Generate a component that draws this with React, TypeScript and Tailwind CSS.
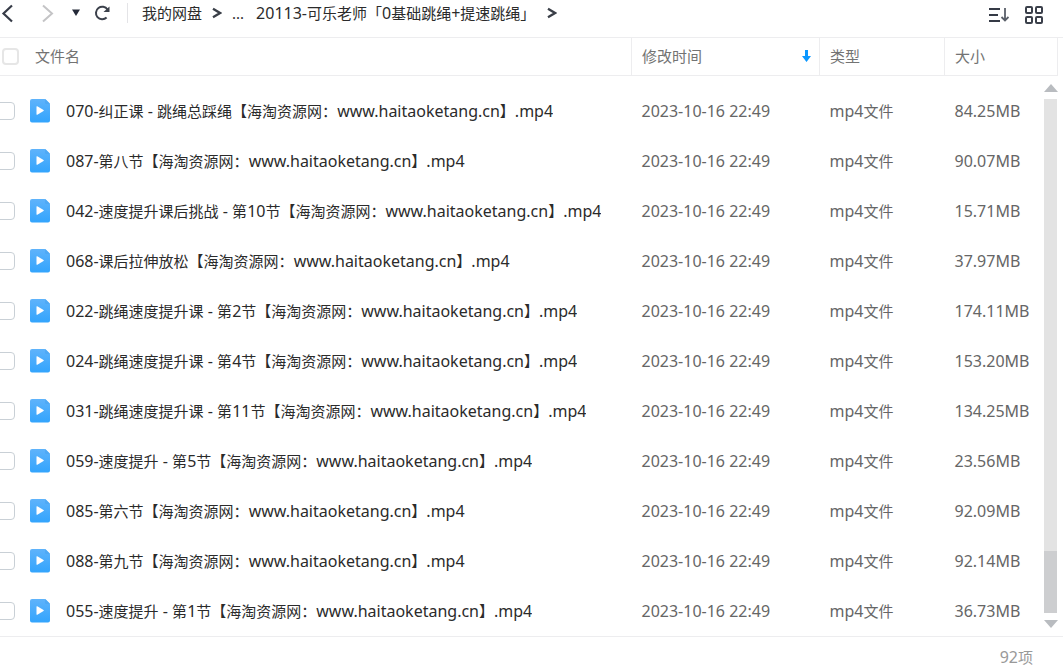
import type { ReactNode } from "react";

const SITE = "【海淘资源网：www.haitaoketang.cn】.mp4";

const files = [
  { name: "070-纠正课 - 跳绳总踩绳", size: "84.25MB" },
  { name: "087-第八节", size: "90.07MB" },
  { name: "042-速度提升课后挑战 - 第10节", size: "15.71MB" },
  { name: "068-课后拉伸放松", size: "37.97MB" },
  { name: "022-跳绳速度提升课 - 第2节", size: "174.11MB" },
  { name: "024-跳绳速度提升课 - 第4节", size: "153.20MB" },
  { name: "031-跳绳速度提升课 - 第11节", size: "134.25MB" },
  { name: "059-速度提升 - 第5节", size: "23.56MB" },
  { name: "085-第六节", size: "92.09MB" },
  { name: "088-第九节", size: "92.14MB" },
  { name: "055-速度提升 - 第1节", size: "36.73MB" },
];

// Latin letters and digits are set one size up from the Chinese text around them
function Mixed({ text }: { text: string }) {
  return text.split(/([\x20-\x7e]+)/).map((part, i) =>
    i % 2 ? <span key={i} className="text-base leading-5">{part}</span> : part
  );
}

function IconButton({ label, className = "", children }: { label: string; className?: string; children: ReactNode }) {
  return (
    <button type="button" aria-label={label} className={`flex shrink-0 items-center justify-center ${className}`}>
      {children}
    </button>
  );
}

function Separator() {
  return (
    <svg width="10" height="12" viewBox="0 0 10 12" fill="none" stroke="#3a3f48" strokeWidth="2.300" aria-hidden="true">
      <path d="M1 1.800l7 4.200-7 4.200" />
    </svg>
  );
}

function VideoIcon() {
  return (
    <svg width="22" height="26" viewBox="0 0 22 26" className="shrink-0" aria-hidden="true">
      <defs>
        <linearGradient id="video" x1="0" y1="0" x2="0" y2="1">
          <stop offset="0" stopColor="#5fb3fb" />
          <stop offset="1" stopColor="#32a4fd" />
        </linearGradient>
      </defs>
      <path d="M3 1h12.500q.8 0 1.400.6l3.500 3.500q.6.600.6 1.400v16a2 2 0 0 1-2 2H3a2 2 0 0 1-2-2V3a2 2 0 0 1 2-2z" fill="url(#video)" />
      <path d="M16 1.100l5 5h-3.500a1.500 1.500 0 0 1-1.500-1.500z" fill="#4fa9f5" />
      <path d="M7.500 8.800v7.400q0 .9.800.5l6.200-3.700q.8-.5 0-1L8.300 8.300q-.8-.4-.8.5z" fill="#fff" />
    </svg>
  );
}

function Toolbar() {
  return (
    <header className="flex h-[38px] items-start justify-between border-b border-[#ededef] pr-5">
      <div className="flex h-[25px] items-center">
        <IconButton label="后退" className="w-4">
          <svg width="16" height="20" viewBox="0 0 16 20" fill="none" stroke="#363b47" strokeWidth="2.200">
            <path d="M12 2.500L3.500 10.500l8.500 8" />
          </svg>
        </IconButton>
        <IconButton label="前进" className="ml-6 w-4">
          <svg width="16" height="20" viewBox="0 0 16 20" fill="none" stroke="#c4c4c6" strokeWidth="2">
            <path d="M3 2.500l9 8-9 8" />
          </svg>
        </IconButton>
        <IconButton label="历史记录" className="ml-3 w-4">
          <svg width="8" height="7" viewBox="0 0 8 7">
            <path d="M0 0.500h8L4 7z" fill="#242a38" />
          </svg>
        </IconButton>
        <IconButton label="刷新" className="ml-2 w-5">
          <svg width="18" height="18" viewBox="0 0 18 18" fill="none">
            <path d="M14.500 5.500A6.300 6.300 0 1 0 13.600 13.600" stroke="#3b404b" strokeWidth="2" />
            <path d="M16.500 2.500v5.500h-6z" fill="#3b404b" />
          </svg>
        </IconButton>
        <span className="ml-[15px] h-5 w-px bg-[#e4e4e7]" />
        <nav aria-label="路径" className="ml-[14px] flex items-center text-[#2b2b2b]">
          <a href="#root">我的网盘</a>
          <span className="mx-2.5"><Separator /></span>
          <a href="#parents">...</a>
          <a href="#folder" className="ml-3"><Mixed text="20113-可乐老师「0基础跳绳+提速跳绳」" /></a>
          <span className="ml-3"><Separator /></span>
        </nav>
      </div>
      <div className="flex h-[30px] items-center gap-4">
        <IconButton label="排序">
          <svg width="21" height="16" viewBox="0 0 21 16" fill="none" stroke="#353a46">
            <path d="M1 2h11M1 8h9M1 14h11" strokeWidth="2" />
            <path d="M17 1v12M13.500 10l3.500 3.500 3.500-3.500" stroke="#5a5f69" strokeWidth="1.800" />
          </svg>
        </IconButton>
        <IconButton label="网格视图">
          <svg width="18" height="18" viewBox="0 0 18 18" fill="none" stroke="#3b404b" strokeWidth="2">
            <rect x="1" y="1" width="6" height="6" rx="1" />
            <rect x="11" y="1" width="6" height="6" rx="1" />
            <rect x="1" y="11" width="6" height="6" rx="1" />
            <rect x="11" y="11" width="6" height="6" rx="1" />
          </svg>
        </IconButton>
      </div>
    </header>
  );
}

function Scrollbar() {
  return (
    <div className="absolute top-[46px] right-1.5 bottom-2 flex w-[13px] flex-col items-center" aria-hidden="true">
      <svg width="14" height="8" viewBox="0 0 14 8">
        <path d="M7 0l7 8H0z" fill="#b9bcc0" />
      </svg>
      <div className="mt-[7px] mb-[7px] flex w-full flex-1 flex-col justify-end bg-[#e3e3e3]">
        <div className="h-[62px] bg-[#cdced0]" />
      </div>
      <svg width="14" height="8" viewBox="0 0 14 8">
        <path d="M0 0h14L7 8z" fill="#b9bcc0" />
      </svg>
    </div>
  );
}

export default function App() {
  return (
    <div className="min-h-screen overflow-hidden bg-white font-['Noto_Sans','Noto_Sans_CJK_SC',sans-serif] text-[15px] leading-5">
      <Toolbar />
      <main className="relative border-b border-[#ededef] pr-[5px]">
        <table className="w-full table-fixed border-collapse text-left text-[#666]">
          <colgroup>
            <col />
            <col className="w-[188px]" />
            <col className="w-[125px]" />
            <col className="w-[113px]" />
          </colgroup>
          <thead>
            <tr className="h-[37px] border-b border-[#ededef] text-[#737373]">
              <th className="p-0 font-normal">
                <div className="flex items-center gap-4 pl-0.5">
                  <input type="checkbox" aria-label="全选" className="size-[17px] appearance-none rounded border-2 border-[#e6e6e6]" />
                  文件名
                </div>
              </th>
              <th className="border-l border-[#ededef] px-2.5 py-0 font-normal">
                <button type="button" className="flex w-full items-center justify-between">
                  修改时间
                  <svg width="9" height="12" viewBox="0 0 9 12" className="-mr-0.5" aria-hidden="true">
                    <path d="M3 0h3v6h3L4.500 12 0 6h3z" fill="#0b97ff" />
                  </svg>
                </button>
              </th>
              <th className="border-l border-[#ededef] px-2.5 py-0 font-normal">类型</th>
              <th className="border-x border-[#ededef] px-2.5 py-0 font-normal">大小</th>
            </tr>
          </thead>
          <tbody className="before:block before:h-2.5">
            {files.map((file) => (
              <tr key={file.name} className="h-[50px]">
                <td className="p-0">
                  <label className="flex items-center">
                    <input type="checkbox" className="-ml-1 h-[18px] w-[19px] shrink-0 appearance-none rounded border border-[#c9d0d6]" />
                    <span className="ml-3.5"><VideoIcon /></span>
                    <span className="ml-[15px] truncate text-[#2b2b2b]"><Mixed text={file.name + SITE} /></span>
                  </label>
                </td>
                <td className="px-2.5 py-0 text-base">2023-10-16 22:49</td>
                <td className="px-2.5 py-0"><Mixed text="mp4文件" /></td>
                <td className="px-2.5 py-0 text-base">{file.size}</td>
              </tr>
            ))}
          </tbody>
        </table>
        <Scrollbar />
      </main>
      <footer className="flex h-[31px] items-start justify-end pt-2.5 pr-[30px] text-[#999]"><Mixed text="92项" /></footer>
    </div>
  );
}
